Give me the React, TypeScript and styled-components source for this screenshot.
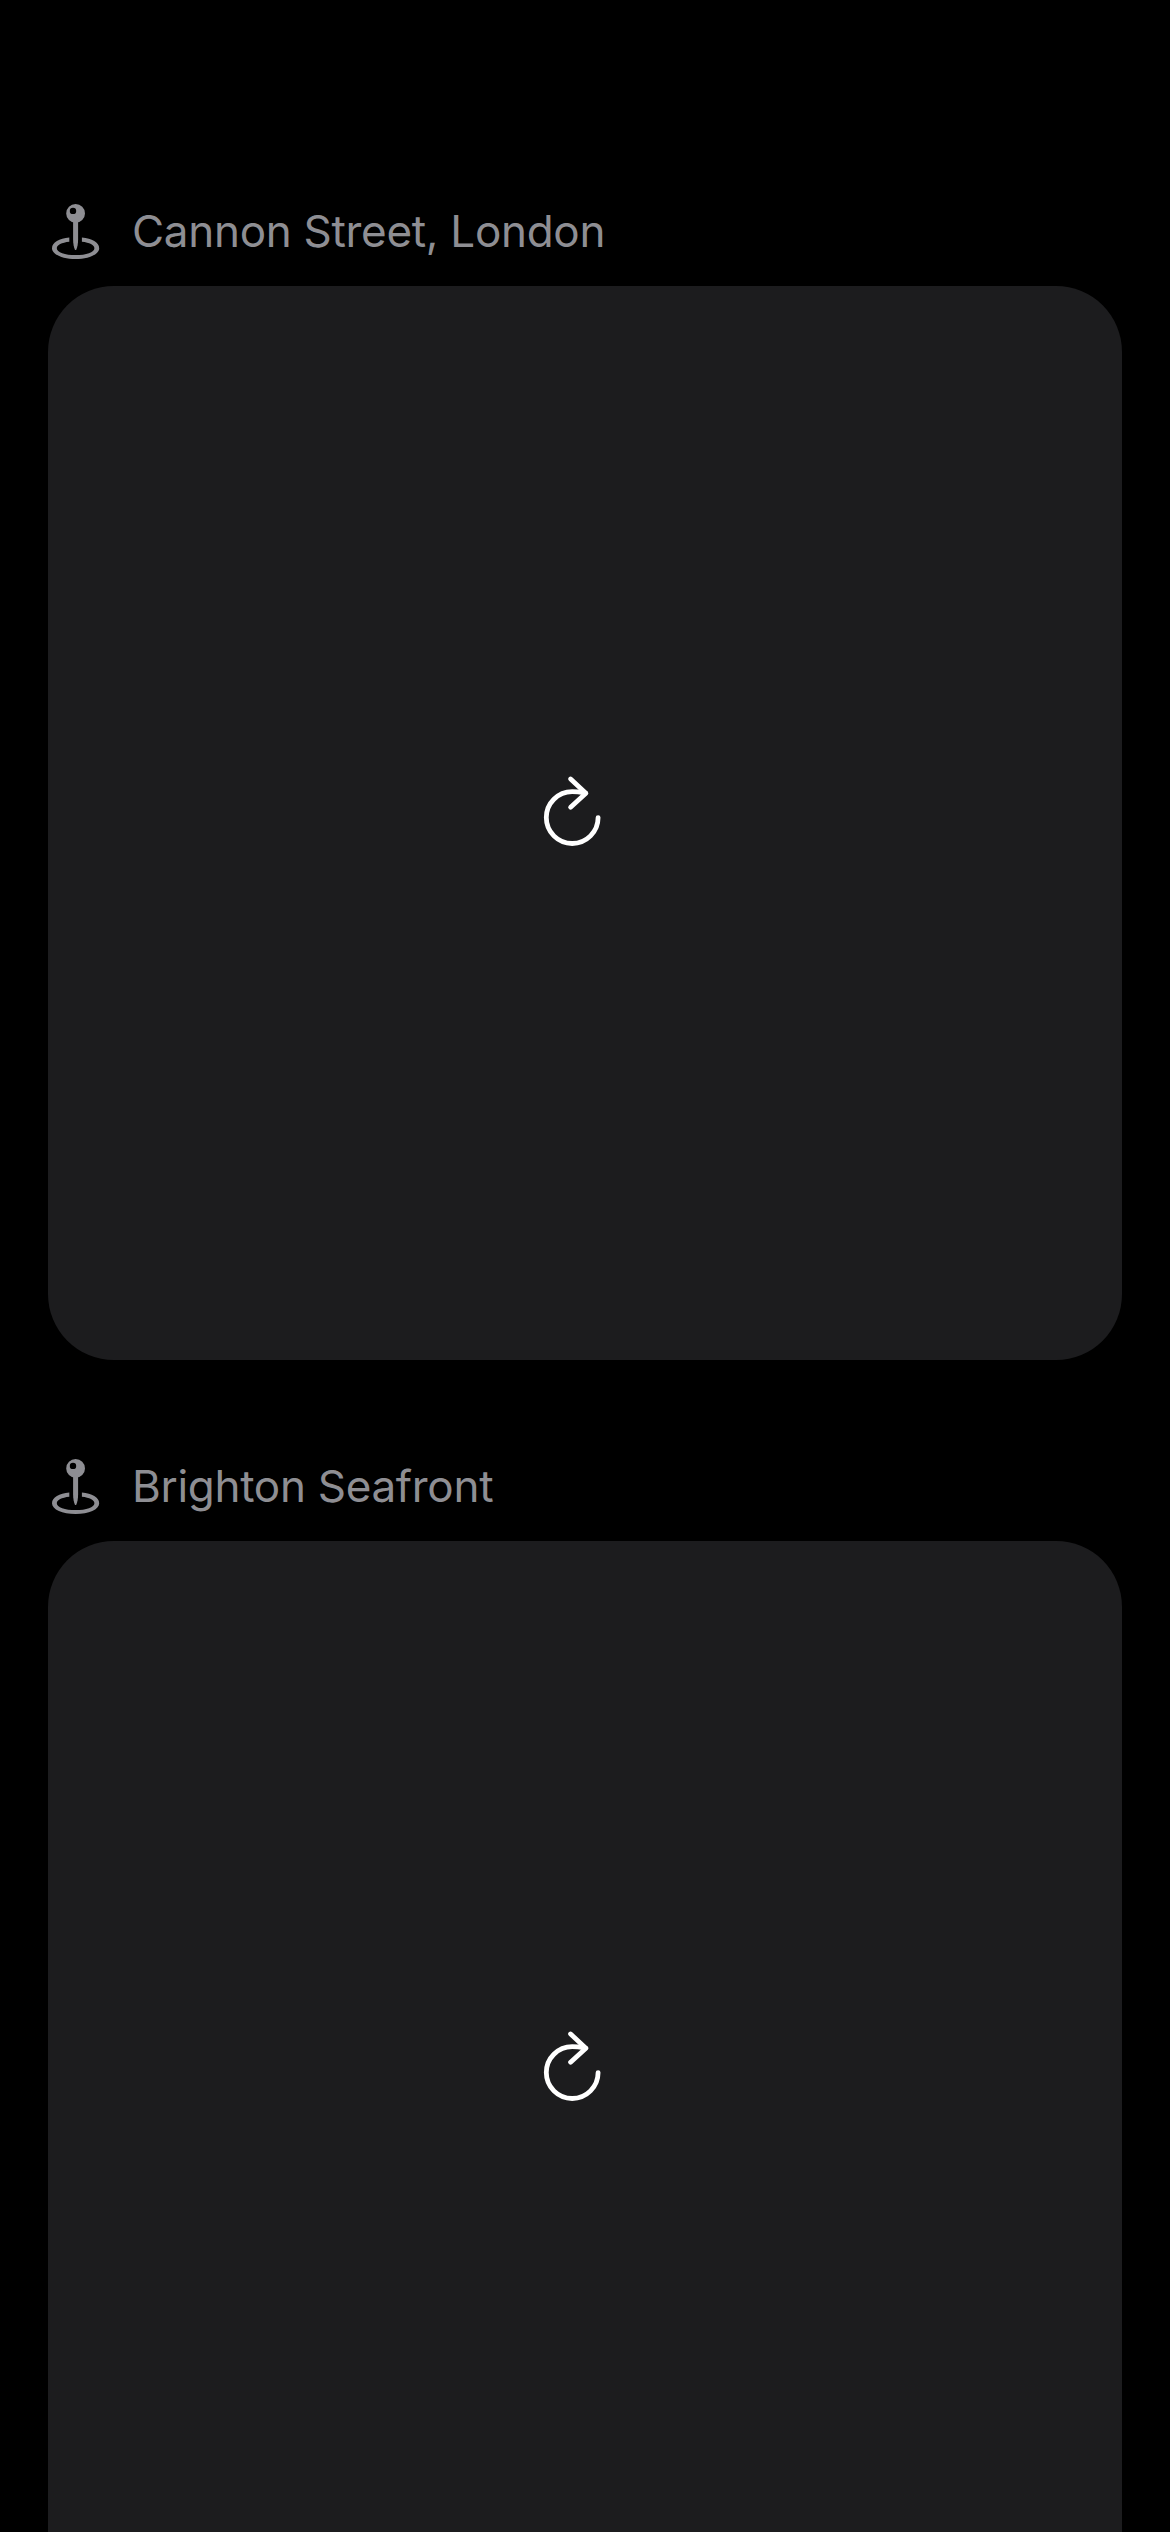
import React from "react";
import styled, { createGlobalStyle } from "styled-components";

const GlobalStyle = createGlobalStyle`
  html, body {
    margin: 0;
    padding: 0;
    background: #000;
  }
`;

const Screen = styled.main`
  box-sizing: border-box;
  height: 2532px;
  overflow: hidden;
  padding: 200px 48px 0;
  display: flex;
  flex-direction: column;
  gap: 95px;
  background: #000;
  font-family: Inter, "Liberation Sans", sans-serif;
`;

const Place = styled.section`
  flex: none;
  display: flex;
  flex-direction: column;
  gap: 24px;
`;

const PlaceHeader = styled.header`
  display: flex;
  align-items: center;
  height: 62px;
  gap: 28px;
  color: #8e8e93;
`;

const PlaceName = styled.h2`
  margin: 0;
  font-size: 44px;
  font-weight: 400;
  line-height: 62px;
  white-space: nowrap;
  letter-spacing: -0.3px;
`;

const Card = styled.div`
  display: flex;
  align-items: center;
  justify-content: center;
  height: 1074px;
  border-radius: 66px;
  background: #1c1c1e;
`;

const ReloadButton = styled.button`
  display: flex;
  margin: 0;
  padding: 0 26px 24px 0;
  border: 0;
  background: none;
  color: #fff;
`;

const PinIcon = () => (
  <svg width="56" height="62" viewBox="0 0 56 62" fill="currentColor" aria-hidden="true">
    <path
      fillRule="evenodd"
      d="M27.6 4a9.4 9.4 0 1 1 0 18.8a9.4 9.4 0 0 1 0-18.8ZM25 7.7a3.2 3.2 0 1 0 0 6.4a3.2 3.2 0 0 0 0-6.4Z"
    />
    <path d="M25.1 22h5v17.5c0 4-.8 8-1.7 9.9q-.8 1.4-1.6 0c-.9-1.9-1.7-5.9-1.7-9.9Z" />
    <path d="M21.3 37.6C11.3 38.6 4 42.7 4 48.2C4 54.4 14.4 59 27.6 59S51.2 54.4 51.2 48.2C51.2 42.7 43.9 38.6 33.9 37.6V41.8C41.5 42.6 46.4 45 46.4 48.2C46.4 52.2 38.2 55.1 27.6 55.1S8.8 52.2 8.8 48.2C8.8 45 13.7 42.6 21.3 41.8Z" />
  </svg>
);

const ReloadIcon = () => (
  <svg
    width="60"
    height="74"
    viewBox="0 0 60 74"
    fill="none"
    stroke="currentColor"
    strokeWidth="4.8"
    strokeLinecap="round"
    strokeLinejoin="round"
    aria-hidden="true"
  >
    <path d="M56.1 43.6A25.9 25.9 0 1 1 30.2 17.7Q35 17.7 43.500 19" />
    <path d="M28.6 5L43.9 19.2L28.6 33.2" />
  </svg>
);

const places = ["Cannon Street, London", "Brighton Seafront"];

export default function App() {
  return (
    <>
      <GlobalStyle />
      <Screen>
        {places.map((name) => (
          <Place key={name}>
            <PlaceHeader>
              <PinIcon />
              <PlaceName>{name}</PlaceName>
            </PlaceHeader>
            <Card>
              <ReloadButton aria-label="Reload">
                <ReloadIcon />
              </ReloadButton>
            </Card>
          </Place>
        ))}
      </Screen>
    </>
  );
}
